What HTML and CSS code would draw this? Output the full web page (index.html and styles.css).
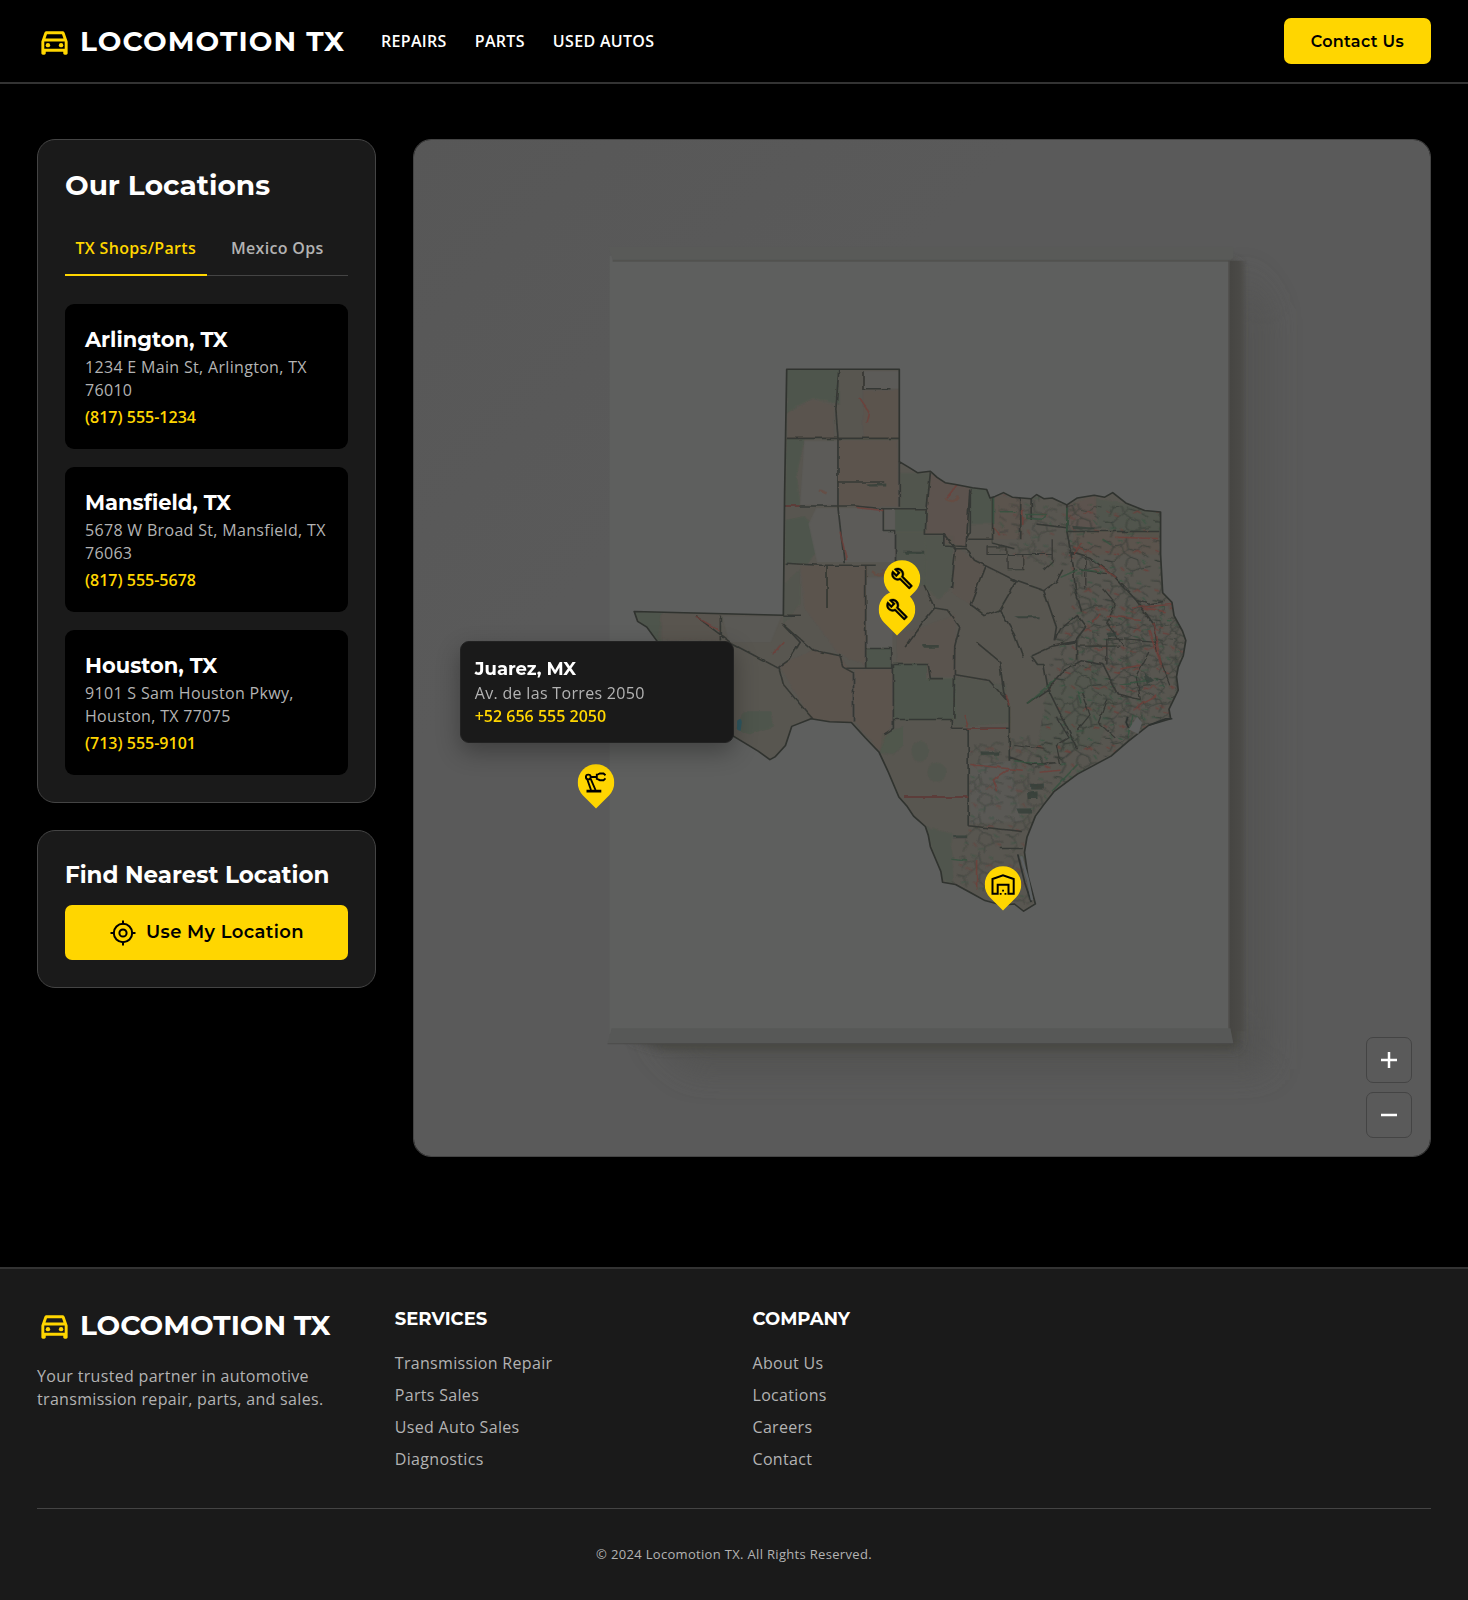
FILE: index.html
```
<!DOCTYPE html>
<html lang="en">
<head>
<meta charset="utf-8">
<meta name="viewport" content="width=device-width, initial-scale=1">
<title>Locomotion TX – Locations</title>
<link rel="stylesheet" href="styles.css">
</head>
<body>
<svg class="defs" width="0" height="0" aria-hidden="true">
  <symbol id="car" viewBox="0 0 24 24"><path d="M18.92 6.01C18.72 5.42 18.16 5 17.5 5h-11c-.66 0-1.21.42-1.42 1.01L3 12v8c0 .55.45 1 1 1h1c.55 0 1-.45 1-1v-1h12v1c0 .55.45 1 1 1h1c.55 0 1-.45 1-1v-8l-2.08-5.99zM6.85 7h10.29l1.04 3H5.81l1.04-3zM19 17H5v-5h14v5z"/><circle cx="7.5" cy="14.5" r="1.5"/><circle cx="16.5" cy="14.5" r="1.5"/></symbol>
  <symbol id="drop" viewBox="0 0 37 45"><path d="M5.5 31.4A18.3 18.3 0 1 1 31.5 31.4L18.5 44.5z"/></symbol>
  <symbol id="wrench" viewBox="0 0 24 24"><path d="M22.61 18.99l-9.08-9.08c.93-2.34.45-5.1-1.44-7C9.79.61 6.21.4 3.66 2.26L7.5 6.11 6.08 7.52 2.25 3.69C.39 6.23.6 9.82 2.9 12.11c1.86 1.86 4.57 2.35 6.89 1.48l9.11 9.11c.39.39 1.02.39 1.41 0l2.3-2.3c.4-.38.4-1.01 0-1.41zm-3 1.6l-9.46-9.46c-.61.45-1.29.72-2 .82-1.36.2-2.79-.21-3.83-1.25C3.37 9.76 2.93 8.5 3 7.26l3.09 3.09 4.24-4.24-3.09-3.09c1.24-.07 2.49.37 3.44 1.31 1.08 1.08 1.49 2.57 1.24 3.96-.12.71-.42 1.37-.88 1.96l9.45 9.45-.88.89z"/></symbol>
</svg>

<header class="site-header">
  <a class="logo logo-wide" href="#"><svg class="logo-icon" aria-hidden="true"><use href="#car"/></svg>LOCOMOTION TX</a>
  <nav class="nav" aria-label="Main">
    <a href="#">REPAIRS</a>
    <a href="#">PARTS</a>
    <a href="#">USED AUTOS</a>
  </nav>
  <button class="btn contact" type="button">Contact Us</button>
</header>

<main class="main">
  <aside class="sidebar">
    <section class="card">
      <h1 class="card-title">Our Locations</h1>
      <div class="tabs" role="tablist">
        <button class="tab active" type="button" role="tab" aria-selected="true">TX Shops/Parts</button>
        <button class="tab" type="button" role="tab" aria-selected="false">Mexico Ops</button>
      </div>
      <ul class="shops">
        <li class="shop"><h2 class="shop-name">Arlington, TX</h2><p class="address">1234 E Main St, Arlington, TX 76010</p><a class="phone" href="tel:8175551234">(817) 555-1234</a></li>
        <li class="shop"><h2 class="shop-name">Mansfield, TX</h2><p class="address">5678 W Broad St, Mansfield, TX 76063</p><a class="phone" href="tel:8175555678">(817) 555-5678</a></li>
        <li class="shop"><h2 class="shop-name">Houston, TX</h2><p class="address">9101 S Sam Houston Pkwy, Houston, TX 77075</p><a class="phone" href="tel:7135559101">(713) 555-9101</a></li>
      </ul>
    </section>
    <section class="card">
      <h2 class="find-title">Find Nearest Location</h2>
      <button class="btn locate" type="button">
        <svg class="locate-icon" viewBox="0 0 28 28" aria-hidden="true" fill="none" stroke="#000" stroke-width="2"><circle cx="14" cy="14" r="9.2"/><circle cx="14" cy="14" r="3.6"/><path d="M14 1.5v4M14 22.5v4M1.5 14h4M22.5 14h4"/></svg>
        Use My Location
      </button>
    </section>
  </aside>

  <section class="map" aria-label="Map of locations">
    <svg class="map-art" viewBox="413 139 1018 1018" aria-hidden="true">
      <defs>
        <linearGradient id="wall" x1="0" y1="0" x2="1" y2="1"><stop offset="0" stop-color="#575757"/><stop offset=".3" stop-color="#5a5a5a"/><stop offset="1" stop-color="#5a5a5a"/></linearGradient>
        <linearGradient id="side" x1="0" x2="1" y1="0" y2="0"><stop offset="0" stop-color="#464542"/><stop offset=".5" stop-color="#4a4946"/><stop offset="1" stop-color="#4a4946" stop-opacity="0"/></linearGradient>
        <filter id="soft" x="-20%" y="-20%" width="140%" height="140%"><feGaussianBlur stdDeviation="5"/></filter>
        <filter id="wide" x="-30%" y="-30%" width="160%" height="160%"><feGaussianBlur stdDeviation="16"/></filter>
        <filter id="fine"><feGaussianBlur stdDeviation="1"/></filter>
        <filter id="ink"><feTurbulence type="fractalNoise" baseFrequency=".035" numOctaves="2" seed="4"/><feDisplacementMap in="SourceGraphic" scale="9" xChannelSelector="R" yChannelSelector="G"/><feGaussianBlur stdDeviation=".9"/></filter>
        <path id="tx" d="M538 75L806 75 806 317 828 331 850 346 880 342 896 358 915 372 940 377 980 385 1014 390 1022 412 1034 408 1054 398 1075 410 1120 414 1133 403 1150 414 1170 412 1205 430 1230 412 1270 405 1295 410 1314 398 1345 425 1390 445 1428 449 1428 560 1433 660 1455 685 1460 720 1480 760 1488 785 1482 825 1470 855 1466 880 1470 915 1448 965 1452 990 1400 1007 1350 1050 1310 1088 1230 1135 1175 1180 1150 1215 1130 1245 1110 1300 1104 1340 1112 1400 1130 1475 1102 1494 1080 1475 1050 1478 1010 1466 975 1445 940 1424 909 1418 905 1390 880 1325 875 1295 868 1272 840 1245 825 1220 805 1195 780 1130 758 1078 725 1040 692 1000 640 998 596 990 550 1010 535 1060 510 1090 498 1097 470 1075 413 1037 330 950 228 785 205 750 183 735 175 709 530 719 533 400z"/>
        <clipPath id="txclip"><use href="#tx"/></clipPath>
        <pattern id="roads" width="117" height="103" patternUnits="userSpaceOnUse">
          <g fill="none" stroke-width="2.2">
            <path stroke="#353b36" d="M4 10l18 2 6 14 20-4 6 18-14 12-12 12-20-4M60 8l4 20 22 6 14-12 17 4M70 52l20 8 4 20-20 8-16-12 4-18zM8 60l16 4 8 18-10 21M96 40l16 12M54 40l16 12M94 80l23-4M28 26l-8 20M48 22l12-14V0M64 28l-10 12M74 88l-2 15"/>
            <path stroke="#6b3f3a" stroke-width="3" d="M30 44l14 4M76 40l10-6 8 6M46 78l8 10M100 84l12 4M12 34l8 4"/>
            <path stroke="#385542" stroke-width="3" d="M40 8l10 4M20 80l12-2M84 14l12 2M58 96l16-2M98 56l8 12"/>
          </g>
        </pattern>
      </defs>
      <rect x="413" y="139" width="1018" height="1018" fill="url(#wall)"/>
      <path d="M650 1030H1240V270L1268 310V1070H690z" fill="#50504e" opacity=".7" filter="url(#wide)"/>
      <path d="M1220 256L1240 264V1042L1238 1050H660L630 1040z" fill="#454440" opacity=".9" filter="url(#soft)"/>
      <rect x="1230" y="260" width="18" height="772" fill="url(#side)"/>
      <rect x="609" y="255" width="621" height="780" fill="#5e5f5e"/>
      <path d="M608 246H1234V257L1231 259H612z" fill="#595a58"/>
      <path d="M612 260H1230" stroke="#4d4d4a" stroke-width="2" opacity=".7"/>
      <path d="M611 1029H1231L1234 1044H607z" fill="#575857"/>
      <path d="M607 1044.500H1234" stroke="#4b4b49" stroke-width="1"/>
      <path d="M1229.500 260V1029" stroke="#4c4b48" stroke-width="1"/>
      <g stroke="#2e2e2e" stroke-width="5" filter="url(#fine)" fill="none">
        <path d="M668 984.500H690" stroke-dasharray="3 4"/><path d="M697 984.500H723" stroke-dasharray="4 2 2 2"/>
        <path d="M1098 984.500H1138" stroke-dasharray="4 3"/><path d="M1144 984.500H1176" stroke-dasharray="3 2 4 2"/>
      </g>
      <g transform="translate(560 340) scale(.4209 .3827)">
        <use href="#tx" fill="#585650"/>
        <g clip-path="url(#txclip)">
          <g fill="#4c574b" opacity=".75" filter="url(#ink)">
            <path d="M538 75H662V165L600 150 565 170 538 190z"/><path d="M538 258H580L562 350 570 432H535z"/><path d="M535 470L580 460 605 490 608 550 590 583H533z"/>
            <path d="M768 440H872V500H768z"/><path d="M797 500H870V640H797z" opacity=".6"/><path d="M808 346H880L872 440H808z" opacity=".6"/><path d="M974 385H1030V480H974z"/>
            <path d="M727 806H788V858H727z"/><path d="M792 848H872V885H940V992H792z"/><path d="M870 510H935V640L900 680 865 640z" opacity=".6"/>
            <path d="M175 705L240 712V790L200 760z"/><path d="M436 970L500 970 505 1010 450 1030 415 1015z"/><path d="M765 1030L815 1010 815 1060 790 1085 760 1080z" opacity=".8"/><ellipse cx="855" cy="1075" rx="20" ry="28" opacity=".6"/><ellipse cx="895" cy="1130" rx="22" ry="26" opacity=".6"/><path d="M870 1275L930 1290 935 1420 905 1410z" opacity=".7"/><path d="M530 640L570 600V690L530 740z" opacity=".5"/><path d="M940 880L1060 900 1070 1000 935 1010z" opacity=".5"/><path d="M1160 910L1260 840 1330 930 1280 1060 1130 1090z" opacity=".4"/><path d="M1270 410L1428 450V520L1280 490z" opacity=".6"/>
          </g>
          <g fill="#60534d" opacity=".6" filter="url(#ink)">
            <path d="M540 190L600 155 650 170V256H540z" opacity=".6"/><path d="M720 130H806V256H720z" opacity=".7"/><path d="M662 260H804V435H662z" opacity=".8"/><path d="M880 350L974 385 965 540 915 530 912 505H868z"/>
            <path d="M730 590H570L580 700 660 820 722 850z" opacity=".7"/><path d="M520 850L600 810 665 825 695 870V1000H600z" opacity=".7"/><path d="M700 860H790V1000L760 1075 700 1000z" opacity=".8"/><path d="M240 715H380V785L230 780z" opacity=".5"/><path d="M800 770L940 720V880H875L870 845H800z" opacity=".6"/><path d="M1030 410H1100V520H1030z" opacity=".7"/><path d="M1210 430L1275 405V490H1210z"/><path d="M1220 500H1425V560H1220z" opacity=".7"/><path d="M940 540L1010 590 975 690 930 660z" opacity=".6"/>
          </g>
          <g fill="#5c5b58"><path d="M722 80H806V126H722z"/><path d="M580 262H658V430H570z"/><path d="M608 438H796V580H610L590 480z"/><path d="M727 620H790V805H727z"/><path d="M385 722H525L500 790 400 790z" opacity=".6"/><path d="M975 1110L1070 1100 1100 1260 975 1265z" opacity=".6"/></g>
          <g filter="url(#ink)">
            <path d="M1205 425L1440 440 1500 700 1490 960 1200 1160 1130 1120 1170 800 1215 700z" fill="url(#roads)"/>
            <path d="M1200 640L1440 650 1500 760 1470 990 1300 1080 1230 900z" fill="url(#roads)" transform="translate(38 47)" opacity=".8"/>
            <path d="M1030 395H1215V560L1180 590 1030 540z" fill="url(#roads)" transform="translate(12 8)" opacity=".7"/>
            <path d="M975 1060L1250 1010 1130 1260 1120 1480 930 1420 975 1270z" fill="url(#roads)" opacity=".7"/>
          </g>
          <g filter="url(#ink)">
            <g fill="none" stroke="#363834" stroke-width="4" stroke-linejoin="round">
              <path d="M662 75L655 180 660 256M538 256H806M722 80V126H785M660 256V435M806 317V435M533 433H700L768 440H872L880 345M660 370H770M660 435L675 583M533 583L620 588H750M768 440V497H797V580M870 440L868 507H912V535L965 540 974 390M726 590V858M634 588V700M530 719H572M380 720V785M320 720L410 795 517 857 545 835 570 790 528 740 600 810 665 825 672 855 697 870V1000M680 858H790M727 806H788V858M792 848H875L880 885H908M792 848V1015L770 1030M520 857L530 900 560 940 600 990M792 992H930V1015M930 1015H1068V1100M970 1015V1270M950 750L938 800 936 990M815 1195H970M970 1270L1100 1285M912 507L940 545H965L985 575 1040 605 1085 630 1150 655 1180 630 1195 600M1085 630L1045 705 1010 720 975 690 1010 590M940 545L930 650M975 400V500L965 520M865 640L890 700 920 705 950 750M890 700L860 740 820 800M1045 705L1080 770 1100 830M1150 655L1180 750 1175 785M1205 430V500L1220 590 1225 650 1240 710M1175 785L1190 755 1230 720 1250 750 1225 785 1190 792M1120 825L1170 800 1230 788M1120 825L1135 848H1150L1160 912 1195 990 1230 1070M1110 950L1160 912 1200 862 1240 838 1290 848 1325 925 1380 940M990 790L1045 840 1055 925 1068 950V1015M940 875L1020 890 1060 940M1228 780V835M1210 555L1260 570 1320 620 1370 680 1400 690 1435 683M1370 680L1410 740 1420 815M1028 410V530L1080 545M1095 410V520M1205 500H1425M970 520H1030M1130 480L1205 490M1120 415V470M1068 1090L1120 1110 1180 1105M1045 1330H1100"/>
              <path d="M1290 650L1320 690 1300 740 1340 800M1230 800H1330M1300 850V780L1420 790M1400 815L1370 880 1380 940M1420 815L1450 900M1235 600L1300 610M1250 560V650M1015 540H1060V560H1015zM1065 560H1100V600H1065zM1170 520V580L1150 600M1100 600V560H1170M1180 985L1210 1040 1180 1060 1190 1110M1080 1060L1150 1070M1240 920L1260 980 1230 1020M1300 940L1280 1000 1320 1040" stroke-width="3"/>
            </g>
            <g fill="none" stroke="#6f3f39" stroke-width="4" opacity=".8">
              <path d="M700 437L768 445M535 433H570M665 500L680 575M815 1195H970M975 1110L1100 1125M990 1360V1440M1100 440V480M1140 1130L1190 1125M1320 515L1420 518M1060 930L1070 955M945 375L920 410M710 150L735 190 730 215M320 722L380 760M505 820L530 790M1280 590L1320 620M1390 700L1440 710M1240 530L1220 560M1070 1120L1030 1150 1040 1180M1370 960L1420 930M1360 700L1460 690M1300 720L1380 730M1400 760L1430 850M1330 860L1380 850M960 980L970 1010M1410 740L1430 850M1285 715L1265 735M1030 490L1045 510M1220 540L1245 550M970 1015H1060"/>
            </g>
            <g fill="none" stroke="#34523f" stroke-width="4" opacity=".8">
              <path d="M1110 950L1180 885M1190 620L1230 600M1110 455H1155L1145 468 1110 465zM1045 448H1085M1205 440V500M1240 950L1230 920M1360 980L1350 1040M1170 1180L1230 1110M1080 1100L1150 1110M1330 900L1400 890M1030 410V480M1290 520L1310 535M930 1355L965 1360M1235 600L1290 605"/>
            </g>
            <g fill="#33403a" opacity=".8"><path d="M730 377L775 374V382H735zM815 550H865V558H820zM860 797H900V804H865zM1000 1076H1046V1084H1000zM1215 485L1270 490V494H1218zM1080 722H1140V727H1090zM932 1296H970V1303H932zM1110 1185L1135 1180V1200H1112zM1085 1225H1120V1238H1090zM1300 765H1325V775H1300zM1390 870L1410 890 1395 900zM1120 1160H1150V1175H1120z"/></g>
            <path d="M745 603a14 8 0 1 0 20-3M615 392l18 8M918 410a14 8 0 1 0 24-3" stroke="#6a4a3c" stroke-width="6" fill="none" opacity=".6"/>
          </g>
          <path d="M420 995Q430 985 431 1000L428 1022 420 1018z" fill="#2f5760"/>
        </g>
        <use href="#tx" fill="none" stroke="#30332f" stroke-width="4" stroke-linejoin="round"/>
        <path d="M1350 985L1346 1000 1352 1014M1400 1007L1440 990 1456 990M1088 1345L1105 1420 1120 1470" fill="none" stroke="#2e3230" stroke-width="4"/>
        <path d="M1352 1018L1372 985 1384 1000 1375 1030z" fill="#5e5f5e"/>
        <path d="M1096 1350L1112 1410 1122 1465" fill="none" stroke="#5d6163" stroke-width="6"/>
      </g>
    </svg>

    <button class="pin pin-arlington" type="button" aria-label="Arlington, TX"><svg viewBox="0 0 37 45"><use href="#drop" fill="#ffd600"/><use href="#wrench" x="7" y="7" width="23" height="23" stroke="#000" stroke-width=".4"/></svg></button>
    <button class="pin pin-mansfield" type="button" aria-label="Mansfield, TX"><svg viewBox="0 0 37 45"><use href="#drop" fill="#ffd600"/><use href="#wrench" x="7" y="7" width="23" height="23" stroke="#000" stroke-width=".4"/></svg></button>
    <button class="pin pin-juarez" type="button" aria-label="Juarez, MX"><svg viewBox="0 0 37 45"><use href="#drop" fill="#ffd600"/><g fill="none" stroke="#000" stroke-width="1.900"><circle cx="10.800" cy="13" r="2.400"/><path d="M13.500 13H19M10 16L13.500 26M13.200 14.800L18 26M19.300 9.800V15.800M19.300 11L22.300 9.500 26 9.500 28 11.300M19.300 14.600L22.300 16.200 26 16.200 28 14.400"/></g><path d="M9 25.700H23.800V28.500H9z"/></svg></button>
    <button class="pin pin-warehouse" type="button" aria-label="Warehouse"><svg viewBox="0 0 37 45"><use href="#drop" fill="#ffd600"/><path d="M8 27.800V13L18.500 9.200 29.200 13V27.800H24V18.800H13.200V27.800z" fill="none" stroke="#000" stroke-width="2"/><path d="M15.200 26.900h1.900v1.900h-1.900zM20 26.900h1.900v1.900H20zM17.600 23.700h1.900v1.900h-1.900z"/></svg></button>

    <div class="popup">
      <h3 class="popup-title">Juarez, MX</h3>
      <p class="address">Av. de las Torres 2050</p>
      <a class="phone popup-phone" href="tel:+526565552050">+52 656 555 2050</a>
    </div>

    <div class="zoom">
      <button class="zoom-btn" type="button" aria-label="Zoom in"><svg viewBox="0 0 18 18"><path d="M9 1v16M1 9h16"/></svg></button>
      <button class="zoom-btn" type="button" aria-label="Zoom out"><svg viewBox="0 0 18 18"><path d="M1 9h16"/></svg></button>
    </div>
  </section>
</main>

<footer class="site-footer">
  <div class="footer-grid">
    <div>
      <a class="logo" href="#"><svg class="logo-icon" aria-hidden="true"><use href="#car"/></svg>LOCOMOTION TX</a>
      <p class="tagline">Your trusted partner in automotive transmission repair, parts, and sales.</p>
    </div>
    <nav aria-labelledby="services">
      <h2 class="footer-title" id="services">SERVICES</h2>
      <ul class="links"><li><a href="#">Transmission Repair</a></li><li><a href="#">Parts Sales</a></li><li><a href="#">Used Auto Sales</a></li><li><a href="#">Diagnostics</a></li></ul>
    </nav>
    <nav aria-labelledby="company">
      <h2 class="footer-title" id="company">COMPANY</h2>
      <ul class="links"><li><a href="#">About Us</a></li><li><a href="#">Locations</a></li><li><a href="#">Careers</a></li><li><a href="#">Contact</a></li></ul>
    </nav>
  </div>
  <p class="copyright">© 2024 Locomotion TX. All Rights Reserved.</p>
</footer>
</body>
</html>
```
FILE: styles.css
```
* { box-sizing: border-box; }
body {
  margin: 0;
  background: #000;
  color: #fff;
  font: 16px/23px "Open Sans", "Noto Sans", sans-serif;
  letter-spacing: .02em;
}
h1, h2, h3, p, ul { margin: 0; padding: 0; }
ul { list-style: none; }
a { color: inherit; text-decoration: none; }
button { font: inherit; letter-spacing: inherit; color: inherit; background: none; border: 0; padding: 0; cursor: pointer; }
svg { display: block; }
.defs { position: absolute; }

.logo, .btn, h1, h2, h3 { font-family: Montserrat, "Open Sans", sans-serif; font-weight: 700; letter-spacing: normal; }

.site-header {
  display: flex;
  align-items: center;
  gap: 36px;
  padding: 18px 37px;
  border-bottom: 2px solid #333;
}
.logo { display: flex; align-items: center; gap: 8px; font-size: 28px; line-height: 39px; white-space: nowrap; }
.logo-wide { letter-spacing: .04em; }
.logo-icon { width: 35px; height: 35px; fill: #ffd600; flex: none; }
.nav { display: flex; gap: 28px; font-weight: 600; }
.btn { background: #ffd600; color: #000; border-radius: 7px; font-weight: 600; }
.contact { margin-left: auto; height: 46px; padding: 0 27px; letter-spacing: .02em; }

.main {
  display: grid;
  grid-template-columns: 339px minmax(0, 1fr);
  gap: 37px;
  align-items: start;
  padding: 55px 37px;
}
.sidebar { display: grid; gap: 27px; }
.card { background: #1a1a1a; border: 1px solid #444; border-radius: 18px; padding: 27px; }
.card-title { font-size: 28px; line-height: 37px; }
.tabs { display: flex; margin-top: 18px; border-bottom: 1px solid #444; }
.tab { flex: 1; height: 54px; margin-bottom: -1px; font-weight: 600; color: #b3b3b3; border-bottom: 2px solid transparent; }
.tab.active { color: #ffd600; border-color: #ffd600; }
.shops { display: grid; gap: 18px; margin-top: 28px; }
.shop { background: #000; border-radius: 9px; padding: 20px; }
.shop-name { font-size: 21px; line-height: 32px; }
.address { color: #b3b3b3; }
.phone { display: block; margin-top: 4px; color: #ffd600; font-weight: 600; letter-spacing: normal; }
.find-title { font-size: 23px; line-height: 35px; }
.locate { display: flex; align-items: center; justify-content: center; gap: 9px; width: 100%; height: 55px; margin-top: 12px; font-size: 18px; letter-spacing: .02em; }
.locate-icon { width: 28px; height: 28px; }

.map { position: relative; aspect-ratio: 1; border: 1px solid #444; border-radius: 18px; overflow: hidden; }
.map-art { width: 100%; height: 100%; }
.pin { position: absolute; width: 37px; height: 45px; transform: translate(-50%, -100%); }
.pin-arlington { left: 48%; top: 45.800%; }
.pin-mansfield { left: 47.500%; top: 48.800%; }
.pin-juarez { left: 17.900%; top: 65.800%; }
.pin-warehouse { left: 58%; top: 75.900%; }
.popup {
  position: absolute;
  left: 4.500%;
  top: 49.300%;
  width: 274px;
  padding: 14px;
  background: #1a1a1a;
  border: 1px solid #222;
  border-radius: 9px;
  box-shadow: 0 9px 23px rgba(0, 0, 0, .3);
}
.popup-title { font-size: 18px; line-height: 26px; }
.popup-phone { margin-top: 0; }
.zoom { position: absolute; right: 18px; bottom: 18px; display: grid; gap: 9px; }
.zoom-btn { display: grid; place-items: center; width: 46px; height: 46px; border: 1px solid #444; border-radius: 7px; }
.zoom-btn svg { width: 18px; height: 18px; stroke: #fff; stroke-width: 2.5; }

.site-footer { margin-top: 55px; padding: 37px; background: #1a1a1a; border-top: 2px solid #333; }
.footer-grid { display: grid; grid-template-columns: repeat(4, minmax(0, 1fr)); gap: 37px; padding-bottom: 37px; border-bottom: 1px solid #444; }
.tagline { margin-top: 20px; color: #b3b3b3; }
.footer-title { font-size: 18px; line-height: 26px; }
.links { display: grid; gap: 9px; margin-top: 20px; color: #b3b3b3; }
.copyright { padding-top: 36px; text-align: center; font-size: 13px; line-height: 18px; color: #b3b3b3; }
```
